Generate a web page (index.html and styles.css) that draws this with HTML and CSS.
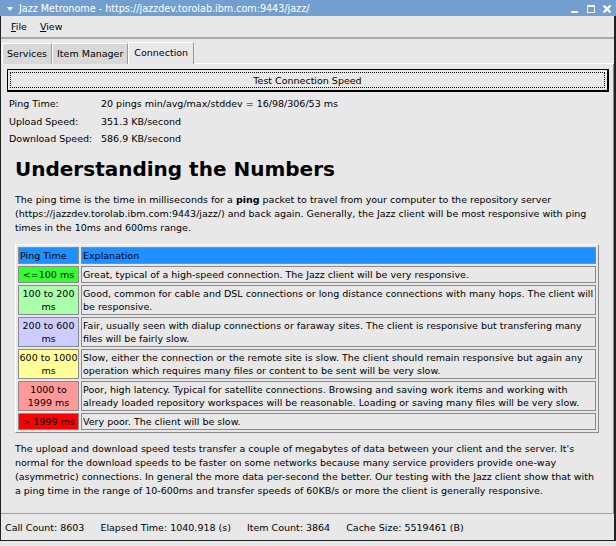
FILE: index.html
```html
<!DOCTYPE html>
<html>
<head>
<meta charset="utf-8">
<link rel="stylesheet" href="styles.css">
</head>
<body>
<div class="window">
  <div class="titlebar">
    <span class="menu-arrow"></span>
    <span class="title">Jazz Metronome - https://jazzdev.torolab.ibm.com:9443/jazz/</span>
    <span class="controls">
      <svg width="10" height="11" viewBox="0 0 10 11"><rect x="1" y="8" width="7" height="2" fill="#fff"/></svg>
      <svg width="10" height="11" viewBox="0 0 10 11"><rect x="1.5" y="2.5" width="7" height="7" fill="none" stroke="#fff" stroke-width="1"/><rect x="1" y="2" width="8" height="2" fill="#fff"/></svg>
      <svg width="10" height="11" viewBox="0 0 10 11"><path d="M1.5 2.5 L8.5 9.5 M8.5 2.5 L1.5 9.5" stroke="#fff" stroke-width="2.2"/></svg>
    </span>
  </div>
  <div class="frame">
    <div class="menubar">
      <span class="menu"><u>F</u>ile</span>
      <span class="menu"><u>V</u>iew</span>
    </div>
    <div class="menusep"></div>
    <div class="tabs">
      <span class="tab">Services</span>
      <span class="tab">Item Manager</span>
      <span class="tab active">Connection</span>
      <span class="tabfill"></span>
    </div>
    <div class="pane">
      <div class="button"><span class="focus">Test Connection Speed</span></div>
      <div class="stats">
        <div class="lbl">Ping Time:</div><div>20 pings min/avg/max/stddev = 16/98/306/53 ms</div>
        <div class="lbl">Upload Speed:</div><div>351.3 KB/second</div>
        <div class="lbl">Download Speed:</div><div>586.9 KB/second</div>
      </div>
      <div class="html">
        <h1>Understanding the Numbers</h1>
        <p>The ping time is the time in milliseconds for a <b>ping</b> packet to travel from your computer to the repository server (https://jazzdev.torolab.ibm.com:9443/jazz/) and back again. Generally, the Jazz client will be most responsive with ping times in the 10ms and 600ms range.</p>
        <table class="tbl">
          <tr><th class="c1">Ping Time</th><th>Explanation</th></tr>
          <tr><td class="c1 g1">&lt;=100 ms</td><td>Great, typical of a high-speed connection. The Jazz client will be very responsive.</td></tr>
          <tr><td class="c1 g2">100 to 200 ms</td><td>Good, common for cable and DSL connections or long distance connections with many hops. The client will be responsive.</td></tr>
          <tr><td class="c1 g3">200 to 600 ms</td><td>Fair, usually seen with dialup connections or faraway sites. The client is responsive but transfering many files will be fairly slow.</td></tr>
          <tr><td class="c1 g4">600 to 1000 ms</td><td>Slow, either the connection or the remote site is slow. The client should remain responsive but again any operation which requires many files or content to be sent will be very slow.</td></tr>
          <tr><td class="c1 g5">1000 to 1999 ms</td><td>Poor, high latency. Typical for satellite connections. Browsing and saving work items and working with already loaded repository workspaces will be reasonable. Loading or saving many files will be very slow.</td></tr>
          <tr><td class="c1 g6">&gt; 1999 ms</td><td>Very poor. The client will be slow.</td></tr>
        </table>
        <p class="p2">The upload and download speed tests transfer a couple of megabytes of data between your client and the server. It's normal for the download speeds to be faster on some networks because many service providers provide one-way (asymmetric) connections. In general the more data per-second the better. Our testing with the Jazz client show that with a ping time in the range of 10-600ms and transfer speeds of 60KB/s or more the client is generally responsive.</p>
      </div>
    </div>
    <div class="status">
      <span>Call Count: 8603</span>
      <span>Elapsed Time: 1040.918 (s)</span>
      <span>Item Count: 3864</span>
      <span>Cache Size: 5519461 (B)</span>
    </div>
  </div>
  <div class="bottom"></div>
</div>
</body>
</html>
```

FILE: styles.css
```css
html, body {
  margin: 0;
  padding: 0;
}
body {
  width: 616px;
  height: 546px;
  overflow: hidden;
  font-family: "DejaVu Sans", sans-serif;
  font-size: 9.5px;
  color: #000;
  background: #e8e8e8;
}
.window {
  width: 616px;
  height: 546px;
  display: flex;
  flex-direction: column;
}
.titlebar {
  height: 16px;
  flex: none;
  background: #729fcf;
  color: #fff;
  display: flex;
  align-items: center;
  padding-left: 7px;
  font-size: 9.6px;
}
.menu-arrow {
  width: 0;
  height: 0;
  border-left: 3.5px solid transparent;
  border-right: 3.5px solid transparent;
  border-top: 4px solid #fff;
  margin-right: 6px;
  margin-top: 1px;
}
.title {
  flex: 1;
}
.controls {
  display: flex;
  gap: 6px;
  margin-right: 4px;
}
.frame {
  flex: 1;
  display: flex;
  flex-direction: column;
  border: 1px solid #222;
  border-top: none;
  border-right-width: 2px;
  min-height: 0;
}
.bottom {
  height: 5px;
  flex: none;
}
.menubar {
  height: 21px;
  flex: none;
  display: flex;
  align-items: center;
  padding-left: 10px;
  gap: 13px;
}
.menusep {
  height: 2px;
  flex: none;
  background: #a9a9a9;
  margin-bottom: 3px;
}
.tabs {
  display: flex;
  flex: none;
  align-items: flex-end;
  height: 22px;
  padding-left: 1px;
}
.tab {
  height: 20px;
  line-height: 20px;
  padding: 0 4px;
  background: #d8d8d8;
  border-top: 1px solid #fff;
  border-left: 1px solid #fff;
  border-right: 1px solid #9a9a9a;
}
.tab.active {
  height: 21px;
  line-height: 20px;
  background: #e8e8e8;
  padding: 0 5px;
}
.tabfill {
  flex: 1;
  border-bottom: 1px solid #fff;
}
.pane {
  flex: 1;
  padding: 5px 4px 0 6px;
  border-right: 1px solid #888;
  min-height: 0;
  overflow: hidden;
}
.button {
  height: 23px;
  box-sizing: border-box;
  border: 1px solid #000;
  border-right-width: 2px;
  border-bottom-width: 2px;
  padding: 2px;
  background: #e8e8e8;
}
.focus {
  display: flex;
  align-items: center;
  justify-content: center;
  height: 100%;
  box-sizing: border-box;
  border: 1px dotted #000;
}
.stats {
  display: grid;
  grid-template-columns: 92px 1fr;
  margin-top: 3px;
  padding-left: 2px;
  line-height: 17.5px;
}
.html {
  padding: 0 8px 0 8px;
}
h1 {
  font-size: 20px;
  font-weight: bold;
  margin: 7px 0 0 0;
  line-height: 28px;
}
p {
  margin: 10px 0 0 0;
  line-height: 14px;
}
.p2 {
  margin-top: 9px;
}
.tbl {
  margin-top: 9px;
  width: 584px;
  border-collapse: separate;
  border-spacing: 2px;
  border: 1px solid;
  border-color: #fff #8a8a8a #8a8a8a #fff;
}
.tbl th, .tbl td {
  font-weight: normal;
  text-align: left;
  padding: 1px 1px;
  border: 1px solid #8a8a8a;
  line-height: 13px;
  vertical-align: top;
}
.tbl th {
  background: #1e90ff;
}
.tbl .c1 {
  width: 59px;
  padding: 1px 0;
  text-align: center;
}
.tbl th.c1 {
  text-align: left;
  padding-left: 1px;
  width: 58px;
}
.g1 { background: #33ff33; }
.g2 { background: #aaffaa; }
.g3 { background: #ccccff; }
.g4 { background: #ffff99; }
.g5 { background: #ff9999; }
.g6 { background: #ff0000; }
.status {
  height: 26px;
  flex: none;
  border-top: 1px solid #a0a0a0;
  display: flex;
  align-items: center;
  padding-left: 4px;
  gap: 16px;
}
```
